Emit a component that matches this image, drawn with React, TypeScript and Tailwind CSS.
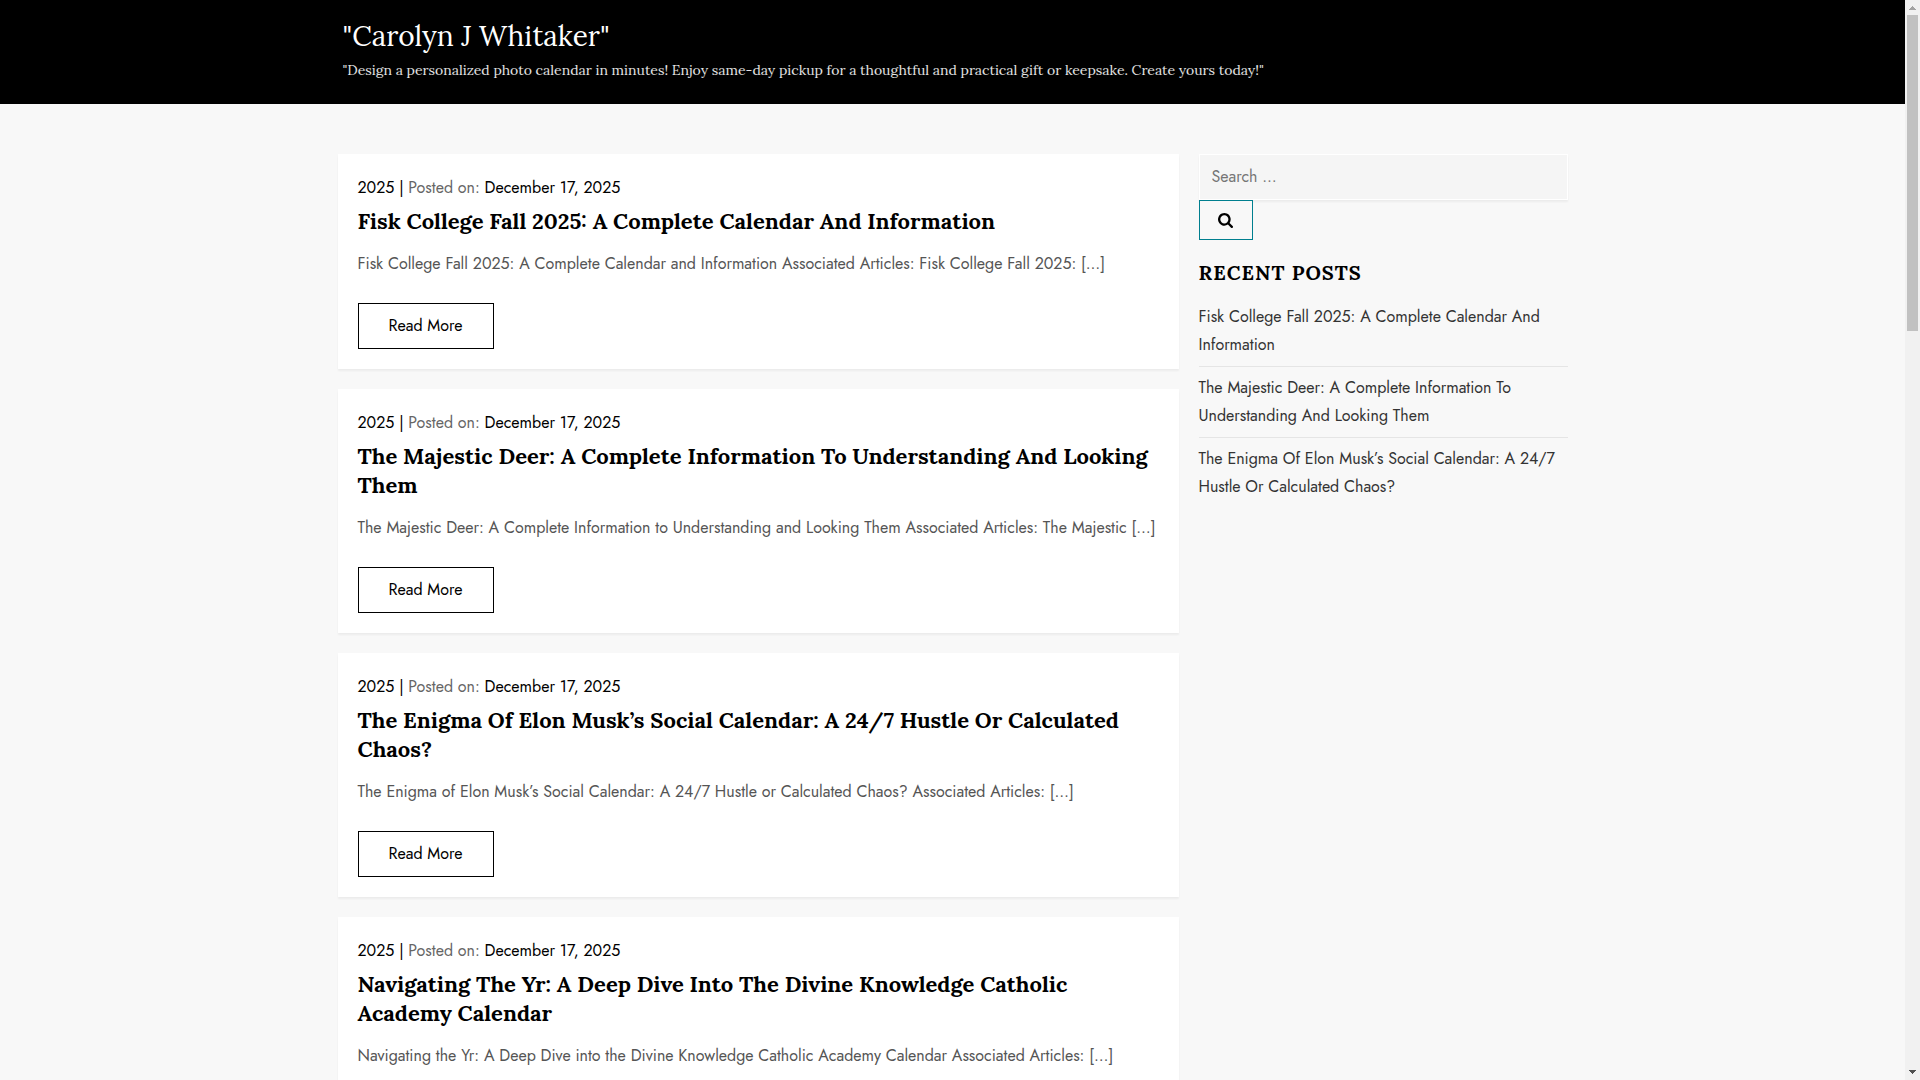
type Post = {
  title: string;
  excerpt: string;
};

const posts: Post[] = [
  {
    title: "Fisk College Fall 2025: A Complete Calendar And Information",
    excerpt:
      "Fisk College Fall 2025: A Complete Calendar and Information Associated Articles: Fisk College Fall 2025: […]",
  },
  {
    title: "The Majestic Deer: A Complete Information To Understanding And Looking Them",
    excerpt:
      "The Majestic Deer: A Complete Information to Understanding and Looking Them Associated Articles: The Majestic […]",
  },
  {
    title: "The Enigma Of Elon Musk’s Social Calendar: A 24/7 Hustle Or Calculated Chaos?",
    excerpt:
      "The Enigma of Elon Musk’s Social Calendar: A 24/7 Hustle or Calculated Chaos? Associated Articles: […]",
  },
  {
    title: "Navigating The Yr: A Deep Dive Into The Divine Knowledge Catholic Academy Calendar",
    excerpt:
      "Navigating the Yr: A Deep Dive into the Divine Knowledge Catholic Academy Calendar Associated Articles: […]",
  },
];

function SearchIcon() {
  return (
    <svg viewBox="0 128 1664 1664" className="w-[15px] h-[15px] fill-current" aria-hidden="true">
      <path d="M1152 832q0-185-131.5-316.5t-316.5-131.5-316.5 131.5-131.5 316.5 131.5 316.5 316.5 131.5 316.5-131.5 131.5-316.5zM1664 1664q0 52-38 90t-90 38q-54 0-90-38l-343-342q-179 124-399 124-143 0-273.5-55.5t-225-150-150-225-55.5-273.5 55.5-273.5 150-225 225-150 273.5-55.5 273.5 55.5 225 150 150 225 55.5 273.5q0 220-124 399l343 343q37 37 37 90z" />
    </svg>
  );
}

function PostCard({ post }: { post: Post }) {
  return (
    <article className="p-5 bg-white shadow-[0_2px_2px_rgba(0,0,0,0.05)]">
      <p className="text-black">
        <a href="#2025">2025</a> | <span className="text-[#666]">Posted on:</span>{" "}
        <a href="#date">December 17, 2025</a>
      </p>
      <h2 className="mt-[5px] font-['Lora','Liberation_Serif',serif] text-[22px] leading-[29px] font-bold text-black">
        <a href="#post">{post.title}</a>
      </h2>
      <p className="mt-[14px] mb-[25px] text-[#555]">{post.excerpt}</p>
      <a
        href="#post"
        className="flex w-fit px-[30px] py-2 border border-black text-black hover:bg-black hover:text-white"
      >
        Read More
      </a>
    </article>
  );
}

function Sidebar() {
  return (
    <aside className="flex-[369] min-w-0">
      <form onSubmit={(e) => e.preventDefault()}>
        <input
          type="search"
          aria-label="Search for:"
          placeholder="Search …"
          className="block w-full px-3 py-2 border border-white bg-[#f5f5f5] shadow-[0_2px_2px_rgba(0,0,0,0.05)] placeholder:text-[#757575] focus:outline-none"
        />
        <button
          type="submit"
          aria-label="Search"
          className="relative flex items-center justify-center w-[54px] h-10 border border-[#007f8f] bg-[#f8f8f8] text-black"
        >
          <SearchIcon />
        </button>
      </form>

      <h2 className="mt-5 mb-[10px] font-['Lora','Liberation_Serif',serif] text-xl leading-[26px] font-bold tracking-wider uppercase text-black">
        Recent Posts
      </h2>
      <ul>
        {posts.slice(0, 3).map((post) => (
          <li key={post.title} className="py-[7px] border-b border-[#e5e5e5] last:border-b-0">
            <a href="#post" className="text-[#333]">
              {post.title}
            </a>
          </li>
        ))}
      </ul>
    </aside>
  );
}

function ScrollBar() {
  return (
    <div className="flex flex-col items-center justify-between w-[15px] shrink-0 bg-[#f1f1f1]" aria-hidden="true">
      <div className="flex flex-col items-center w-full h-[331px]">
        <svg width="15" height="15" viewBox="0 0 15 15" className="shrink-0 fill-[#a3a3a3]" shapeRendering="crispEdges">
          <path d="M4 10V9h1V8h1V7h1V6h1v1h1v1h1v1h1v1z" />
        </svg>
        <div className="w-[11px] grow bg-[#c1c1c1]" />
      </div>
      <svg width="15" height="15" viewBox="0 0 15 15" className="fill-[#505050]" shapeRendering="crispEdges">
        <path d="M4 5v1h1v1h1v1h1v1h1V8h1V7h1V6h1V5z" />
      </svg>
    </div>
  );
}

export default function App() {
  return (
    <div className="flex h-screen bg-[#f8f8f8] font-['Jost','Lato',sans-serif] text-base leading-7">
      <div className="flex-1 min-w-0 overflow-y-auto [scrollbar-width:none]">
        <header className="bg-black text-white">
          <div className="max-w-[1240px] mx-auto px-[10px] pt-4 pb-5 font-['Lora','Liberation_Serif',serif]">
            <h1 className="text-[28px] leading-10">
              <a href="#home">"Carolyn J Whitaker"</a>
            </h1>
            <p className="text-sm leading-7 text-white/90">
              "Design a personalized photo calendar in minutes! Enjoy same-day pickup for a thoughtful and practical
              gift or keepsake. Create yours today!"
            </p>
          </div>
        </header>

        <div className="flex flex-col lg:flex-row gap-5 max-w-[1250px] mx-auto px-[10px] py-[50px]">
          <main className="flex-[841] min-w-0 flex flex-col gap-5">
            {posts.map((post) => (
              <PostCard key={post.title} post={post} />
            ))}
          </main>
          <Sidebar />
        </div>
      </div>
      <ScrollBar />
    </div>
  );
}
